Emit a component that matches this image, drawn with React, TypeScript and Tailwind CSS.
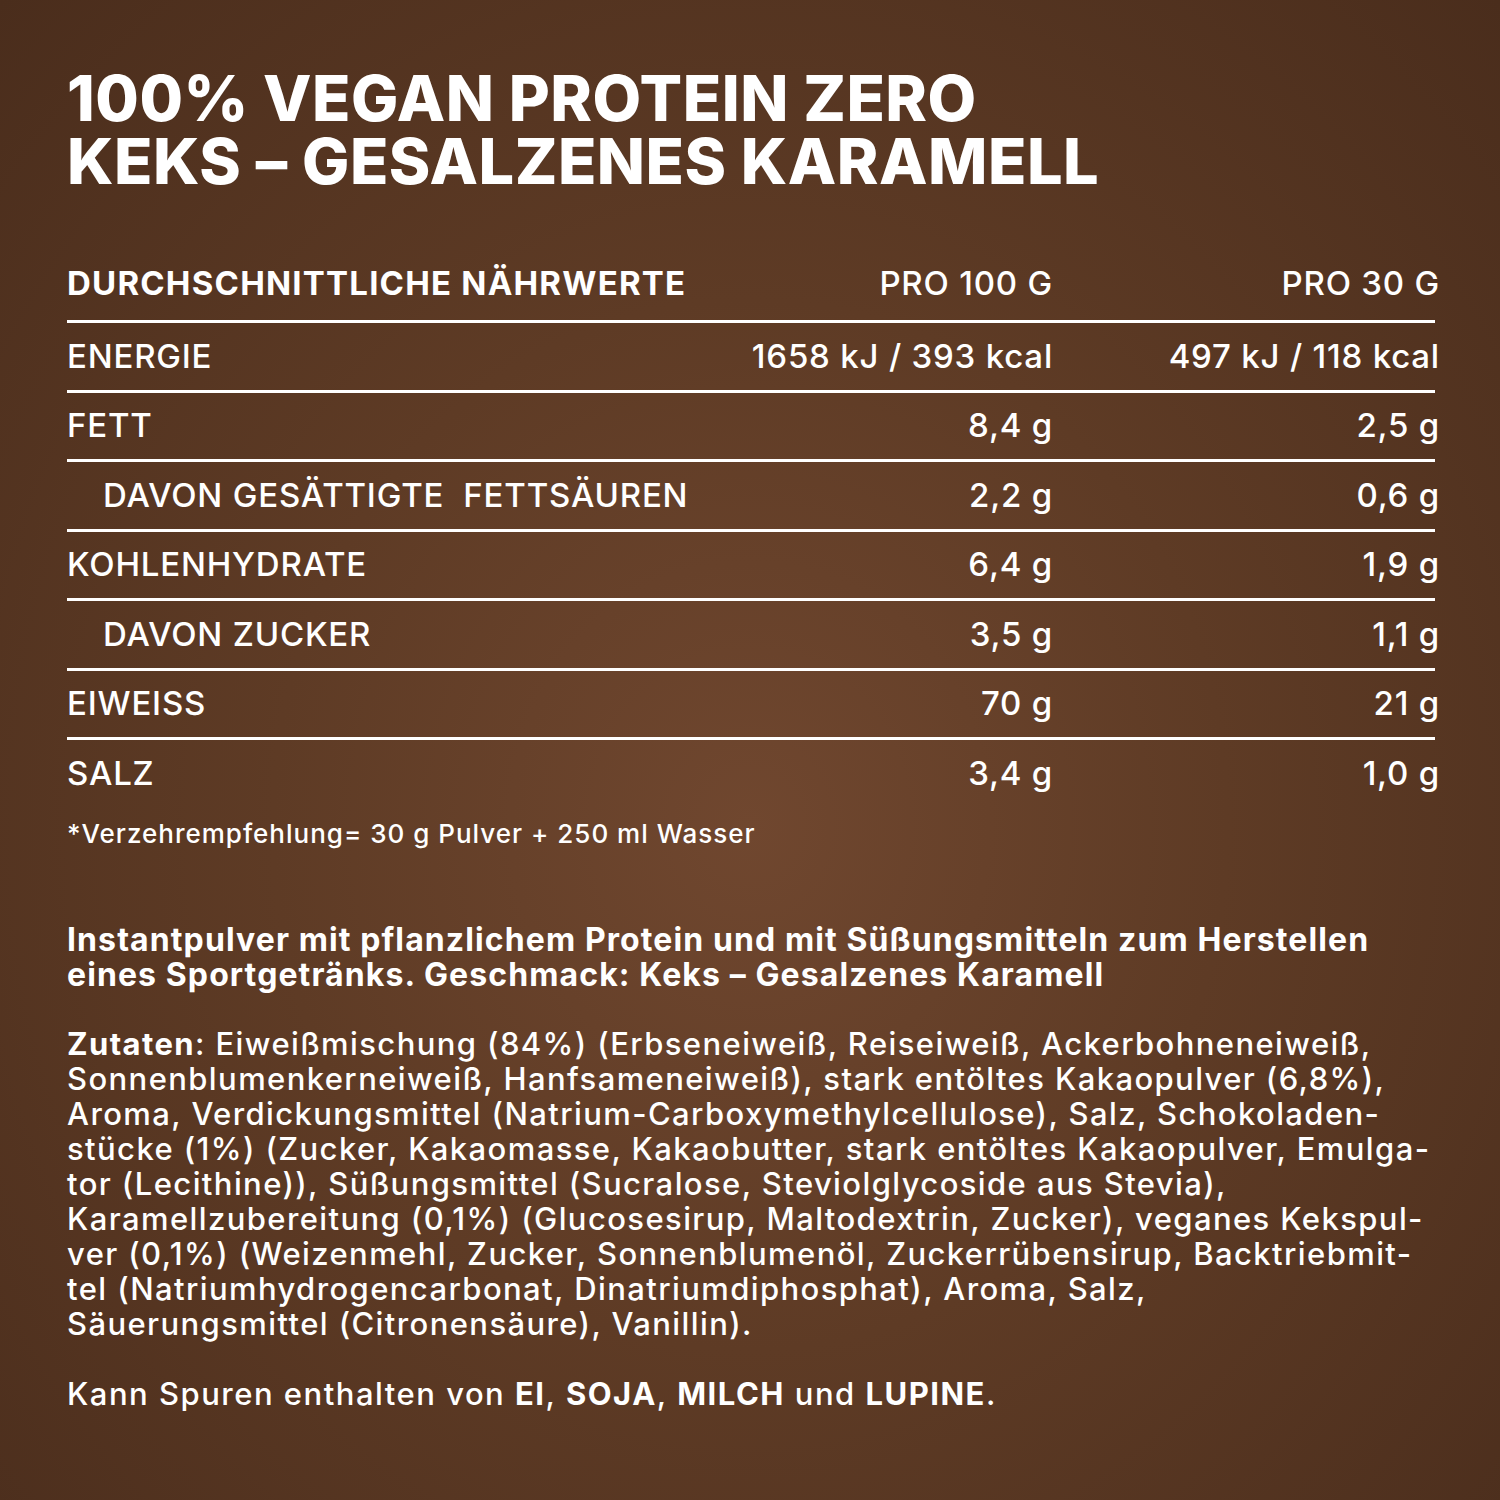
const rows = [
  { label: "ENERGIE", per100: "1658 kJ / 393 kcal", per30: "497 kJ / 118 kcal" },
  { label: "FETT", per100: "8,4 g", per30: "2,5 g" },
  { label: "DAVON GESÄTTIGTE  FETTSÄUREN", per100: "2,2 g", per30: "0,6 g", indent: true },
  { label: "KOHLENHYDRATE", per100: "6,4 g", per30: "1,9 g" },
  { label: "DAVON ZUCKER", per100: "3,5 g", per30: "1,1 g", indent: true },
  { label: "EIWEISS", per100: "70 g", per30: "21 g" },
  { label: "SALZ", per100: "3,4 g", per30: "1,0 g" },
];

const ingredients = [
  "Eiweißmischung (84%) (Erbseneiweiß, Reiseiweiß, Ackerbohneneiweiß,",
  "Sonnenblumenkerneiweiß, Hanfsameneiweiß), stark entöltes Kakaopulver (6,8%),",
  "Aroma, Verdickungsmittel (Natrium-Carboxymethylcellulose), Salz, Schokoladen-",
  "stücke (1%) (Zucker, Kakaomasse, Kakaobutter, stark entöltes Kakaopulver, Emulga-",
  "tor (Lecithine)), Süßungsmittel (Sucralose, Steviolglycoside aus Stevia),",
  "Karamellzubereitung (0,1%) (Glucosesirup, Maltodextrin, Zucker), veganes Kekspul-",
  "ver (0,1%) (Weizenmehl, Zucker, Sonnenblumenöl, Zuckerrübensirup, Backtriebmit-",
  "tel (Natriumhydrogencarbonat, Dinatriumdiphosphat), Aroma, Salz,",
  "Säuerungsmittel (Citronensäure), Vanillin).",
];

export default function App() {
  return (
    <div className="w-[1500px] h-[1500px] overflow-hidden bg-[radial-gradient(ellipse_at_50%_55%,#70472f_0%,#5e3b25_45%,#4a2d1c_100%)] px-[67px] pt-[67px] text-white font-['Inter',sans-serif]">
      <h1 className="text-[63px] leading-[63px] font-extrabold tracking-[0.5px] whitespace-nowrap">
        100% VEGAN PROTEIN ZERO
        <br />
        KEKS – GESALZENES KARAMELL
      </h1>

      {/* Nährwerttabelle */}
      <div className="mt-[65px] w-[1368px] text-[33px] leading-none">
        <div className="flex items-end h-[62px] pb-[20px]">
          <div className="flex-1 font-bold tracking-[1.2px]">DURCHSCHNITTLICHE NÄHRWERTE</div>
          <div className="font-medium tracking-[0.8px] text-right">PRO 100 G</div>
          <div className="w-[387px] -mr-[5px] font-medium tracking-[0.8px] text-right">PRO 30 G</div>
        </div>
        {rows.map((r, i) => (
          <div
            key={i}
            className="flex items-center h-[69.5px] border-t-[3px] border-white font-medium tracking-[0.8px]"
          >
            <div className={r.indent ? "flex-1 pl-[36px] whitespace-pre" : "flex-1"}>{r.label}</div>
            <div className="text-right">{r.per100}</div>
            <div className="w-[387px] -mr-[5px] text-right">{r.per30}</div>
          </div>
        ))}
      </div>

      <p className="mt-[14px] text-[26px] leading-none font-medium tracking-[1px]">
        *Verzehrempfehlung= 30 g Pulver + 250 ml Wasser
      </p>

      <p className="mt-[75px] text-[32px] leading-[35px] font-bold tracking-[1.1px] whitespace-nowrap">
        Instantpulver mit pflanzlichem Protein und mit Süßungsmitteln zum Herstellen
        <br />
        eines Sportgetränks. Geschmack: Keks – Gesalzenes Karamell
      </p>

      <div className="mt-[34px] text-[31px] leading-[35px] font-medium tracking-[1.4px] whitespace-nowrap">
        {ingredients.map((line, i) => (
          <div key={i}>
            {i === 0 && <span className="font-bold">Zutaten</span>}
            {i === 0 ? ": " : ""}
            {line}
          </div>
        ))}
      </div>

      <p className="mt-[35px] text-[31px] leading-[35px] font-medium tracking-[1.5px] whitespace-nowrap">
        Kann Spuren enthalten von <span className="font-bold">EI</span>,{" "}
        <span className="font-bold">SOJA</span>, <span className="font-bold">MILCH</span> und{" "}
        <span className="font-bold">LUPINE</span>.
      </p>
    </div>
  );
}
